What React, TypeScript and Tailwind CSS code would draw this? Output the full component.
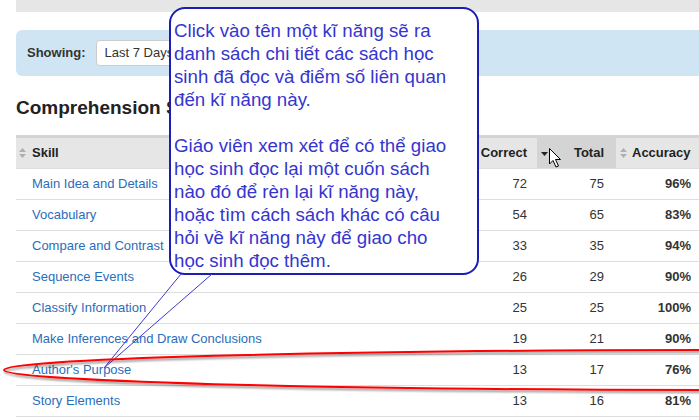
import React from "react";

const rows = [
  ["Main Idea and Details", 72, 75, "96%"],
  ["Vocabulary", 54, 65, "83%"],
  ["Compare and Contrast", 33, 35, "94%"],
  ["Sequence Events", 26, 29, "90%"],
  ["Classify Information", 25, 25, "100%"],
  ["Make Inferences and Draw Conclusions", 19, 21, "90%"],
  ["Author's Purpose", 13, 17, "76%"],
  ["Story Elements", 13, 16, "81%"],
] as const;

function SortBoth() {
  return (
    <svg width="7" height="10" viewBox="0 0 7 10" className="shrink-0">
      <path d="M0 4 L3.5 0 L7 4 Z" fill="#b0b0b0" />
      <path d="M0 6 L3.5 10 L7 6 Z" fill="#b0b0b0" />
    </svg>
  );
}

const calloutLines1 = [
  "Click vào tên một kĩ năng sẽ ra",
  "danh sách chi tiết các sách học",
  "sinh đã đọc và điểm số liên quan",
  "đến kĩ năng này.",
];
const calloutLines2 = [
  "Giáo viên xem xét để có thể giao",
  "học sinh đọc lại một cuốn sách",
  "nào đó để rèn lại kĩ năng này,",
  "hoặc tìm cách sách khác có câu",
  "hỏi về kĩ năng này để giao cho",
  "học sinh đọc thêm.",
];

export default function App() {
  return (
    <div
      className="relative w-[699px] h-[420px] overflow-hidden bg-white text-[#333]"
      style={{ fontFamily: '"Liberation Sans", Arial, sans-serif' }}
    >
      <div className="pl-[16px]">
        <div className="h-[12px] bg-[#e6e6e6]" />
        <div className="mt-[18px] h-[46px] rounded-l-[6px] bg-[#d0e5f3] flex items-center pl-[11px]">
          <span className="text-[13px] font-bold text-[#333]">Showing:</span>
          <div className="ml-[10px] h-[26px] w-[160px] rounded-[4px] border border-[#ccc] bg-white flex items-center pl-[8px] text-[13px] text-[#333]">
            Last 7 Days
          </div>
        </div>
        <div className="mt-[18px] h-[28px] flex items-center text-[19px] font-bold text-[#222]">
          Comprehension Skills
        </div>
        <div className="mt-[13px] border-t-[3px] border-[#d4d4d4]">
          <div className="flex h-[31px] bg-[#e6e6e6] text-[13px] font-bold text-[#222] border-b border-[#ddd]">
            <div className="flex-1 flex items-center pl-[3px] gap-[6px]">
              <SortBoth />
              <span>Skill</span>
            </div>
            <div className="w-[77px] flex items-center justify-end pr-[10px]">Correct</div>
            <div className="w-[79px] flex items-center justify-end pr-[12px] bg-[#d4d4d4] relative">
              <svg width="7" height="4" viewBox="0 0 7 4" className="absolute left-[4px] top-[14px]">
                <path d="M0 0 L7 0 L3.5 4 Z" fill="#222" />
              </svg>
              <span>Total</span>
            </div>
            <div className="w-[83px] flex items-center pl-[4px] gap-[5px]">
              <SortBoth />
              <span>Accuracy</span>
            </div>
          </div>
          {rows.map((r) => (
            <div key={r[0]} className="flex h-[31px] border-b border-[#ddd] text-[13px]">
              <div className="flex-1 flex items-center pl-[16px] text-[#2a6ebb]">{r[0]}</div>
              <div className="w-[77px] flex items-center justify-end pr-[10px]">{r[1]}</div>
              <div className="w-[79px] flex items-center justify-end pr-[12px]">{r[2]}</div>
              <div className="w-[83px] flex items-center justify-end pr-[8px] font-bold">{r[3]}</div>
            </div>
          ))}
        </div>
      </div>

      {/* callout bubble */}
      <div
        className="absolute left-[169px] top-[7px] w-[310px] h-[268px] rounded-[16px] border-2 border-[#1c1cb8] bg-white pl-[3px] pt-[10px] text-[18.7px] leading-[23px] text-[#3535d0]"
        style={{ fontFamily: '"Liberation Sans", Arial, sans-serif' }}
      >
        {calloutLines1.map((l) => (
          <div key={l} className="whitespace-nowrap">{l}</div>
        ))}
        <div className="h-[23px]" />
        {calloutLines2.map((l) => (
          <div key={l} className="whitespace-nowrap">{l}</div>
        ))}
      </div>

      {/* tail, ellipse, cursor */}
      <svg className="absolute left-0 top-0 pointer-events-none" width="699" height="420" viewBox="0 0 699 420">
        <defs>
          <filter id="sh" x="-10%" y="-50%" width="120%" height="200%">
            <feDropShadow dx="1" dy="2" stdDeviation="1.2" floodColor="#000" floodOpacity="0.45" />
          </filter>
        </defs>
        <line x1="181" y1="274" x2="104" y2="368" stroke="#3a3ad6" strokeWidth="1" />
        <line x1="212" y1="274" x2="104" y2="368" stroke="#3a3ad6" strokeWidth="1" />
        <ellipse cx="722" cy="370" rx="718" ry="20" fill="none" stroke="#ff0000" strokeWidth="2" filter="url(#sh)" />
        <path
          d="M549.5 148.5 L549.5 164 L553 160.5 L556 167 L558.5 166 L555.5 159.5 L560.5 159.5 Z"
          fill="#fff"
          stroke="#000"
          strokeWidth="1"
          strokeLinejoin="round"
        />
      </svg>
    </div>
  );
}
